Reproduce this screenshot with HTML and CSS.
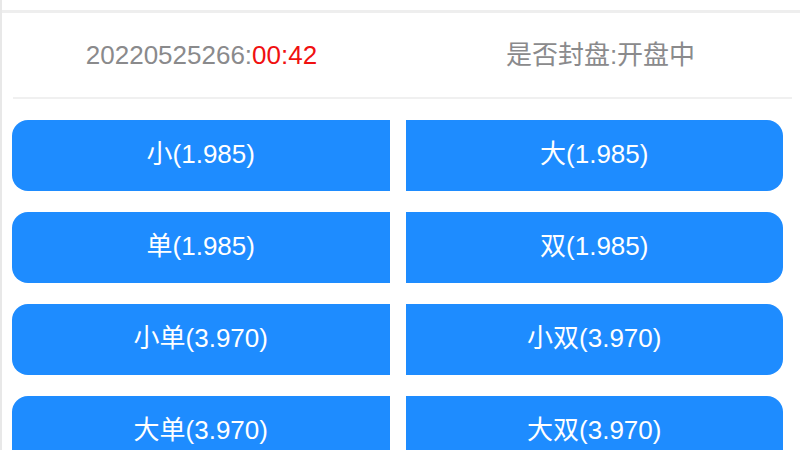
FILE: index.html
```html
<!DOCTYPE html>
<html lang="zh-CN">
<head>
<meta charset="utf-8">
<title>开盘</title>
<link rel="stylesheet" href="styles.css">
</head>
<body>
<div class="page">
  <div class="topbar"></div>
  <div class="header">
    <div class="cell">20220525266:<span class="time">00:42</span></div>
    <div class="cell">是否封盘:开盘中</div>
  </div>
  <div class="divider"></div>
  <div class="grid">
    <button class="btn left">小(1.985)</button>
    <button class="btn right">大(1.985)</button>
    <button class="btn left">单(1.985)</button>
    <button class="btn right">双(1.985)</button>
    <button class="btn left">小单(3.970)</button>
    <button class="btn right">小双(3.970)</button>
    <button class="btn left">大单(3.970)</button>
    <button class="btn right">大双(3.970)</button>
  </div>
</div>
</body>
</html>
```
FILE: styles.css
```css
html, body {
  margin: 0;
  padding: 0;
  background: #ffffff;
  overflow: hidden;
}
body {
  font-family: "Liberation Sans", "Noto Sans CJK SC", sans-serif;
}
.page {
  border-left: 2px solid #e8e8e8;
  min-height: 450px;
  box-sizing: border-box;
}
.topbar {
  height: 10px;
  border-bottom: 3px solid #eeeeee;
}
.header {
  display: grid;
  grid-template-columns: 1fr 1fr;
  align-items: center;
  height: 84px;
}
.divider {
  height: 2px;
  background: #f0f0f0;
  margin: 0 8px 0 11px;
}
.cell {
  text-align: center;
  font-size: 26px;
  color: #8a8a8c;
  line-height: 1;
}
.time {
  color: #f01010;
}
.grid {
  display: grid;
  grid-template-columns: 1fr 1fr;
  column-gap: 16px;
  row-gap: 21px;
  padding: 21px 17px 0 10px;
}
.btn {
  height: 71px;
  border: none;
  background: #1e8cff;
  color: #ffffff;
  font-family: "Liberation Sans", "Noto Sans CJK SC", sans-serif;
  font-size: 26px;
  line-height: 1;
  padding: 0 0 4px 0;
  margin: 0;
}
.btn.left {
  border-radius: 16px 0 0 16px;
}
.btn.right {
  border-radius: 0 16px 16px 0;
}
```
